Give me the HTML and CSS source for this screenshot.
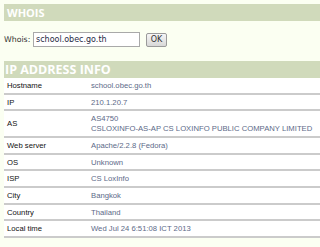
FILE: index.html
```html
<!DOCTYPE html>
<html>
    <head>
        <title>Whois</title>
        <meta charset="UTF-8">
        <meta name="viewport" content="width=device-width, initial-scale=1.0">
        <link rel="stylesheet" href="styles.css">
    </head>
    <body>
        <h2 class="section-title">WHOIS</h2>
        <form class="whois-form" action="#" method="GET">
            <label for="whois-ip">Whois:</label>
            <input type="text" id="whois-ip" name="q" value="school.obec.go.th"/>
            <button class="ok-btn" type="submit">OK</button>
        </form>
        <h2 class="section-title big">IP ADDRESS INFO</h2>
        <table class="info-table">
            <tr><td class="info-label">Hostname</td><td>school.obec.go.th</td></tr>
            <tr><td class="info-label">IP</td><td>210.1.20.7</td></tr>
            <tr><td class="info-label">AS</td><td>AS4750<br>CSLOXINFO-AS-AP CS LOXINFO PUBLIC COMPANY LIMITED</td></tr>
            <tr><td class="info-label">Web server</td><td>Apache/2.2.8 (Fedora)</td></tr>
            <tr><td class="info-label">OS</td><td>Unknown</td></tr>
            <tr><td class="info-label">ISP</td><td>CS LoxInfo</td></tr>
            <tr><td class="info-label">City</td><td>Bangkok</td></tr>
            <tr><td class="info-label">Country</td><td>Thailand</td></tr>
            <tr><td class="info-label">Local time</td><td>Wed Jul 24 6:51:08 ICT 2013</td></tr>
        </table>
    </body>
</html>
```

FILE: styles.css
```css
* {
  margin: 0;
  padding: 0;
  box-sizing: border-box;
}

body {
  font-family: "DejaVu Sans", Verdana, sans-serif;
  background-color: #fbfff2;
  padding: 4px 0 0 4px;
  width: 320px;
  height: 247px;
  overflow: hidden;
}

.section-title {
  background-color: #d0dabb;
  color: #ffffff;
  font-family: "Open Sans", sans-serif;
  font-weight: 700;
  font-size: 11px;
  height: 17px;
  line-height: 17px;
  padding-left: 3px;
}

.section-title.big {
  font-size: 12.5px;
  padding-left: 1px;
}

.whois-form {
  display: flex;
  align-items: center;
  padding: 11px 0 14px 0;
}

.whois-form label {
  font-size: 7.8px;
  color: #333333;
  width: 29px;
}

.whois-form input {
  width: 107px;
  height: 15px;
  border: 1px solid #a9a9a9;
  background-color: #ffffff;
  font-family: "DejaVu Sans", sans-serif;
  font-size: 8px;
  color: #1f2a44;
  padding: 0 2px;
}

.ok-btn {
  margin-left: 6px;
  width: 21px;
  height: 14px;
  font-family: "DejaVu Sans", sans-serif;
  font-size: 8px;
  color: #333333;
  background: linear-gradient(#f6f6f6, #d8d8d8);
  border: 1px solid #9a9a9a;
  border-radius: 2px;
}

.info-table {
  width: 316px;
  background-color: #ffffff;
  border-collapse: collapse;
  font-family: "Liberation Sans", Arial, sans-serif;
  font-size: 7.7px;
}

.info-table td {
  padding: 3px 3px 2px 3px;
  line-height: 9.7px;
  border-bottom: 2px solid #cbcbcb;
  color: #5c6a88;
  vertical-align: middle;
}

.info-table .info-label {
  width: 84px;
  color: #111111;
}
```
